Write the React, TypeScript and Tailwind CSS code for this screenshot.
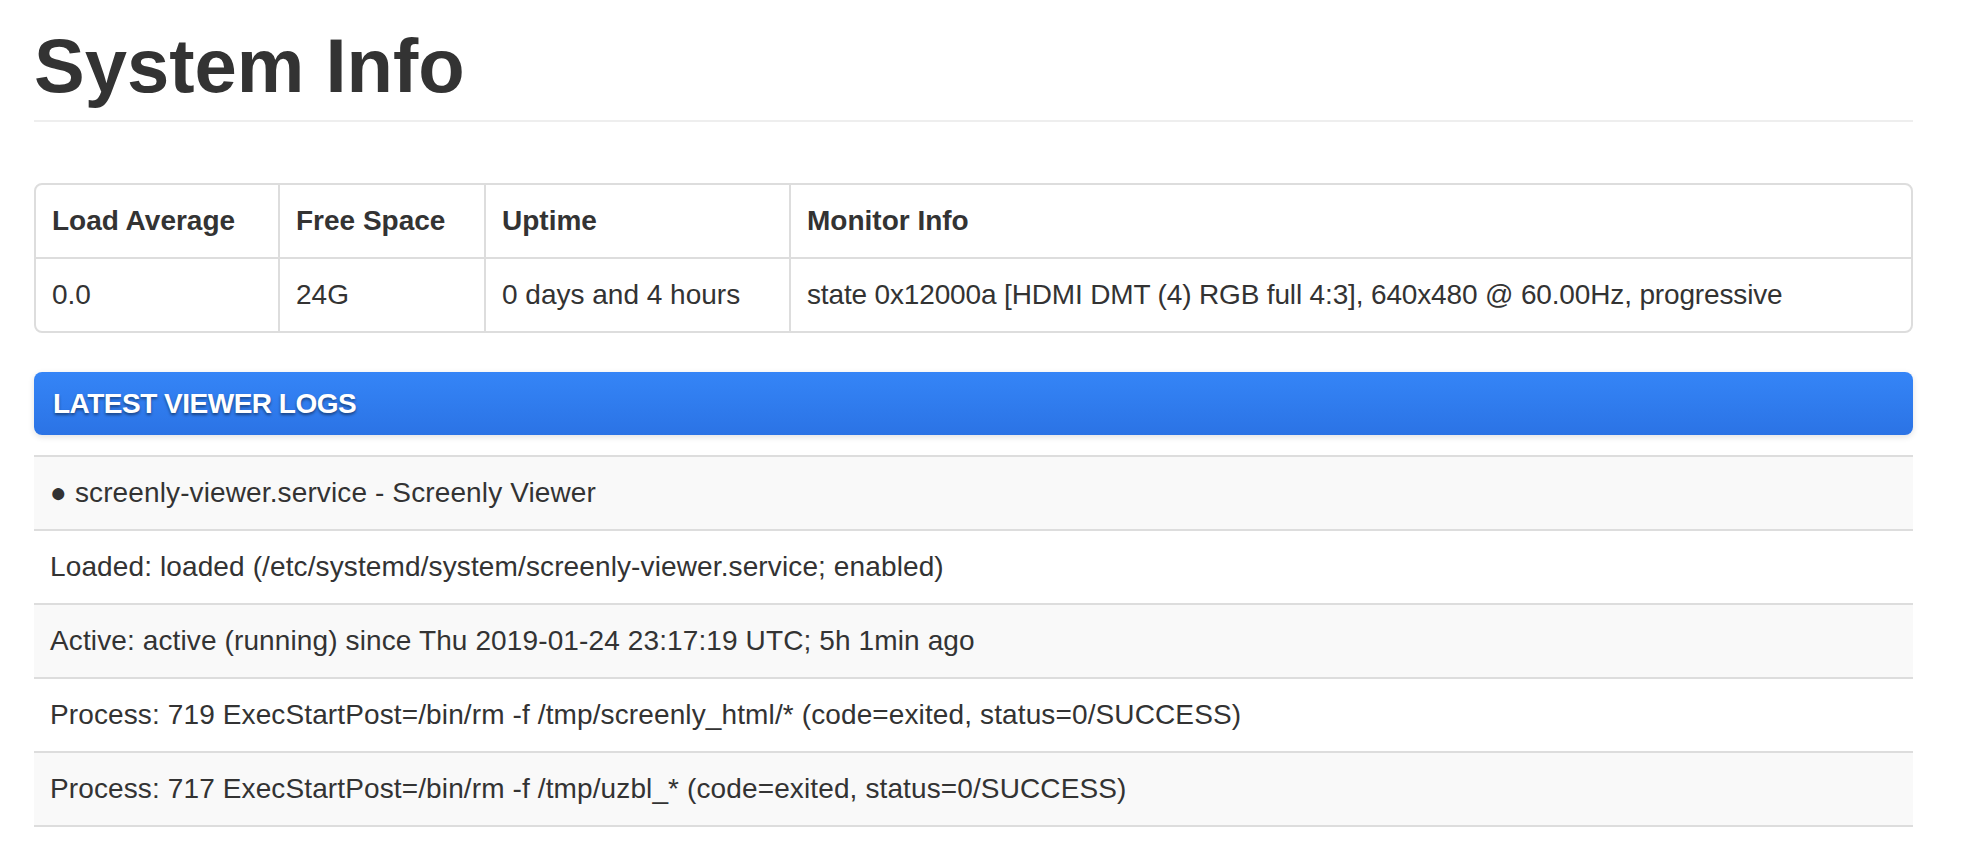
const stats = [
  { label: "Load Average", value: "0.0" },
  { label: "Free Space", value: "24G" },
  { label: "Uptime", value: "0 days and 4 hours" },
  {
    label: "Monitor Info",
    value: "state 0x12000a [HDMI DMT (4) RGB full 4:3], 640x480 @ 60.00Hz, progressive",
  },
]

const logs = [
  "● screenly-viewer.service - Screenly Viewer",
  "Loaded: loaded (/etc/systemd/system/screenly-viewer.service; enabled)",
  "Active: active (running) since Thu 2019-01-24 23:17:19 UTC; 5h 1min ago",
  "Process: 719 ExecStartPost=/bin/rm -f /tmp/screenly_html/* (code=exited, status=0/SUCCESS)",
  "Process: 717 ExecStartPost=/bin/rm -f /tmp/uzbl_* (code=exited, status=0/SUCCESS)",
]

export default function App() {
  return (
    <div className="min-h-screen bg-white text-[#333333] font-['Liberation_Sans',Arial,sans-serif]">
      <div className="ml-[34px] w-[1879px]">
        {/* Page header */}
        <div className="border-b-2 border-[#eeeeee] pt-[26px] pb-[14px]">
          <h1 className="text-[76px] leading-[80px] font-bold">System Info</h1>
        </div>

        {/* Stats table */}
        <div className="mt-[61px] border-2 border-[#dddddd] rounded-[8px] overflow-hidden text-[28px] leading-[40px]">
          <div className="grid grid-cols-[242px_206px_305px_1fr]">
            {stats.map((s, i) => (
              <div key={s.label} className={`py-[16px] px-[16px] font-bold ${i > 0 ? "border-l-2 border-[#dddddd]" : ""}`}>
                {s.label}
              </div>
            ))}
            {stats.map((s, i) => (
              <div
                key={s.label + "-v"}
                className={`py-[16px] px-[16px] border-t-2 border-[#dddddd] whitespace-nowrap ${i > 0 ? "border-l-2" : ""} ${i === 3 ? "tracking-[-0.15px]" : ""}`}
              >
                {s.value}
              </div>
            ))}
          </div>
        </div>

        {/* Logs header */}
        <div className="mt-[39px] h-[63px] flex items-center pl-[19px] rounded-[8px] bg-linear-to-b from-[#3585f7] to-[#2b73e5] shadow-[0_2px_6px_rgba(0,0,0,0.12)]">
          <span className="text-white text-[28px] leading-[40px] font-bold tracking-[-0.5px] [text-shadow:0_2px_3px_rgba(0,0,0,0.45)]">
            LATEST VIEWER LOGS
          </span>
        </div>

        {/* Logs list */}
        <div className="mt-[20px] border-b-2 border-[#dddddd] text-[28px] leading-[40px] tracking-[0.12px]">
          {logs.map((line, i) => (
            <div
              key={i}
              className={`border-t-2 border-[#dddddd] py-[16px] px-[16px] ${i % 2 === 0 ? "bg-[#f9f9f9]" : "bg-white"}`}
            >
              {line}
            </div>
          ))}
        </div>
      </div>
    </div>
  )
}
